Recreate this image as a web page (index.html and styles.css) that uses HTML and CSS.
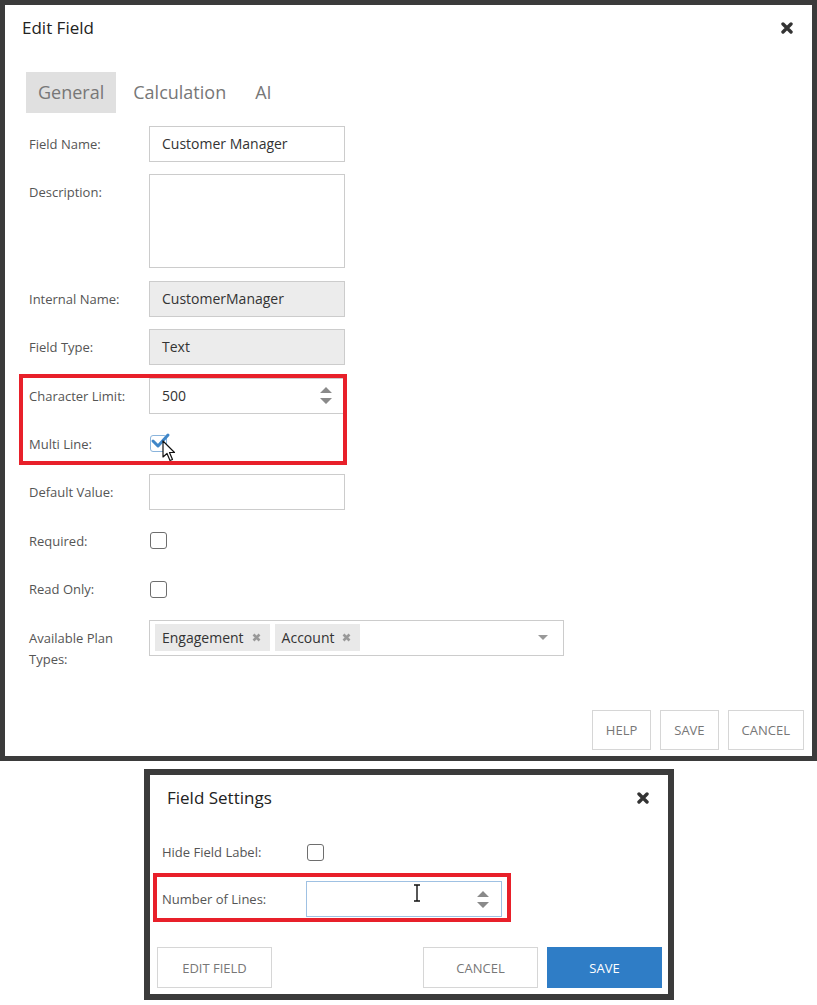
FILE: index.html
```html
<!DOCTYPE html>
<html lang="en">

<head>
    <meta charset="UTF-8">
    <meta name="viewport" content="width=device-width, initial-scale=1.0">
    <title>Edit Field</title>
    <link rel="stylesheet" href="styles.css">
</head>

<body>
    <!-- Edit Field dialog -->
    <div class="dialog edit-field">
        <div class="dialog-header">
            <h2 class="dialog-title">Edit Field</h2>
            <svg class="close" width="12" height="12" viewBox="0 0 12 12">
                <path d="M2 2 L10 10 M10 2 L2 10" stroke="#333" stroke-width="3.4" stroke-linecap="round" />
            </svg>
        </div>

        <div class="tabs">
            <div class="tab active">General</div>
            <div class="tab">Calculation</div>
            <div class="tab">AI</div>
        </div>

        <div class="form">
            <div class="row">
                <label>Field Name:</label>
                <div class="input">Customer Manager</div>
            </div>
            <div class="row">
                <label>Description:</label>
                <div class="input textarea"></div>
            </div>
            <div class="row">
                <label>Internal Name:</label>
                <div class="input readonly">CustomerManager</div>
            </div>
            <div class="row">
                <label>Field Type:</label>
                <div class="input readonly">Text</div>
            </div>
            <div class="row">
                <label>Character Limit:</label>
                <div class="input number">
                    <span>500</span>
                    <svg width="12" height="17" viewBox="0 0 12 17">
                        <path d="M6 0 L12 6 H0Z M0 11 H12 L6 17Z" fill="#8a8a8a" />
                    </svg>
                </div>
            </div>
            <div class="row">
                <label>Multi Line:</label>
                <div class="check checked">
                    <svg class="tick" width="22" height="20" viewBox="0 0 22 20">
                        <path d="M3 9 L8 14 L18 3" fill="none" stroke="#3f86c8" stroke-width="3" stroke-linecap="round" stroke-linejoin="round" />
                    </svg>
                    <svg class="pointer" width="14" height="22" viewBox="0 0 14 22">
                        <path d="M1 1 L1 17 L5 13.5 L8 20.5 L10.5 19.5 L7.5 12.5 L12.5 12.5 Z" fill="#fff" stroke="#111" stroke-width="1.2" stroke-linejoin="round" />
                    </svg>
                </div>
            </div>
            <div class="row">
                <label>Default Value:</label>
                <div class="input"></div>
            </div>
            <div class="row">
                <label>Required:</label>
                <div class="check"></div>
            </div>
            <div class="row">
                <label>Read Only:</label>
                <div class="check"></div>
            </div>
            <div class="row">
                <label class="wrap">Available Plan Types:</label>
                <div class="input multi-select">
                    <span class="chip">Engagement
                        <svg width="9" height="9" viewBox="0 0 9 9"><path d="M1.5 1.5 L7.5 7.5 M7.5 1.5 L1.5 7.5" stroke="#999" stroke-width="2.6" /></svg>
                    </span>
                    <span class="chip">Account
                        <svg width="9" height="9" viewBox="0 0 9 9"><path d="M1.5 1.5 L7.5 7.5 M7.5 1.5 L1.5 7.5" stroke="#999" stroke-width="2.6" /></svg>
                    </span>
                    <svg class="caret" width="10" height="5" viewBox="0 0 10 5">
                        <path d="M0 0 H10 L5 5Z" fill="#999" />
                    </svg>
                </div>
            </div>
        </div>

        <div class="footer">
            <button class="btn">HELP</button>
            <button class="btn">SAVE</button>
            <button class="btn">CANCEL</button>
        </div>

        <div class="callout callout-limit"></div>
    </div>

    <!-- Field Settings dialog -->
    <div class="dialog field-settings">
        <div class="dialog-header">
            <h2 class="dialog-title">Field Settings</h2>
            <svg class="close" width="12" height="12" viewBox="0 0 12 12">
                <path d="M2 2 L10 10 M10 2 L2 10" stroke="#333" stroke-width="3.4" stroke-linecap="round" />
            </svg>
        </div>

        <div class="form settings-form">
            <div class="row">
                <label>Hide Field Label:</label>
                <div class="check"></div>
            </div>
            <div class="row">
                <label>Number of Lines:</label>
                <div class="input number focused">
                    <span></span>
                    <svg class="ibeam" width="8" height="18" viewBox="0 0 8 18">
                        <path d="M1 1 H7 M4 1 V17 M1 17 H7" stroke="#111" stroke-width="1.4" fill="none" />
                    </svg>
                    <svg width="12" height="17" viewBox="0 0 12 17">
                        <path d="M6 0 L12 6 H0Z M0 11 H12 L6 17Z" fill="#8a8a8a" />
                    </svg>
                </div>
            </div>
        </div>

        <div class="footer split">
            <button class="btn wide">EDIT FIELD</button>
            <div class="btn-group">
                <button class="btn wide">CANCEL</button>
                <button class="btn wide primary">SAVE</button>
            </div>
        </div>

        <div class="callout callout-lines"></div>
    </div>
</body>

</html>
```

FILE: styles.css
```css
* {
    box-sizing: border-box;
}

body {
    margin: 0;
    background: #fff;
    font-family: "Open Sans", "Noto Sans", sans-serif;
}

.dialog {
    position: relative;
    display: flex;
    flex-direction: column;
    background: #fff;
    border: 5px solid #3b3b3b;
}

.edit-field {
    width: 817px;
    height: 761px;
}

.field-settings {
    width: 530px;
    height: 231px;
    margin: 8px 0 0 144px;
    border-width: 6px;
}

.dialog-header {
    display: flex;
    justify-content: space-between;
    align-items: center;
    height: 35px;
    padding: 11px 19px 0 17px;
}

.dialog-title {
    margin: 0;
    font-size: 17px;
    font-weight: 400;
    line-height: 24px;
    color: #222;
}

.tabs {
    display: flex;
    gap: 5px;
    margin: 32px 0 0 21px;
}

.tab {
    height: 41px;
    padding: 0 12px;
    font-size: 18px;
    line-height: 41px;
    color: #777;
}

.tab.active {
    background: #e0e0e0;
}

.form {
    display: flex;
    flex-direction: column;
    gap: 12.4px;
    margin-top: 13px;
    padding-left: 24px;
}

.row {
    display: flex;
    align-items: flex-start;
}

.row label {
    flex: none;
    width: 120px;
    font-size: 13px;
    line-height: 36px;
    color: #555;
}

.row label.wrap {
    padding-top: 8px;
    line-height: 21px;
}

.input {
    width: 196px;
    height: 36px;
    padding: 0 12px;
    border: 1px solid #ccc;
    font-size: 14px;
    line-height: 34px;
    color: #333;
}

.input.textarea {
    height: 94px;
}

.input.readonly {
    background: #ececec;
}

.input.number {
    display: flex;
    justify-content: space-between;
    align-items: center;
}

.input.focused {
    position: relative;
    border-color: #9fc1e3;
}

.ibeam {
    position: absolute;
    left: 106px;
    top: 2px;
}

.multi-select {
    display: flex;
    align-items: center;
    gap: 5px;
    width: 415px;
    padding: 0 15px 0 5px;
}

.chip {
    display: flex;
    align-items: center;
    gap: 8px;
    height: 27px;
    padding: 0 9px 0 7px;
    background: #e9e9e9;
    line-height: 27px;
}

.caret {
    margin-left: auto;
}

.check {
    position: relative;
    align-self: center;
    width: 17px;
    height: 17px;
    margin-left: 1px;
    border: 1.5px solid #6e6e6e;
    border-radius: 3px;
}

.check.checked {
    border-color: #8ab4dc;
}

.check .tick {
    position: absolute;
    left: -1px;
    top: -4px;
}

.check .pointer {
    position: absolute;
    left: 11px;
    top: 4px;
}

.footer {
    display: flex;
    justify-content: flex-end;
    gap: 9px;
    margin-top: auto;
    padding: 0 8px 6px;
}

.btn {
    height: 40px;
    padding: 0 13px;
    border: 1px solid #d6d6d6;
    background: #fff;
    font-family: inherit;
    font-size: 13px;
    color: #777;
}

.btn.wide {
    width: 115px;
    height: 41px;
}

.btn.primary {
    border-color: #2f7dc6;
    background: #2f7dc6;
    color: #fff;
}

.footer.split {
    justify-content: space-between;
    padding: 0 6px 6px 7px;
}

.btn-group {
    display: flex;
    gap: 9px;
}

.settings-form {
    gap: 11px;
    margin-top: 24px;
    padding-left: 12px;
}

.settings-form .row label {
    width: 144px;
}

/* red annotation frames */
.callout {
    position: absolute;
    border: 4px solid #e8202a;
    pointer-events: none;
}

.callout-limit {
    left: 14px;
    top: 369px;
    width: 328px;
    height: 91px;
}

.callout-lines {
    left: 3px;
    top: 98px;
    width: 358px;
    height: 49px;
}
```
